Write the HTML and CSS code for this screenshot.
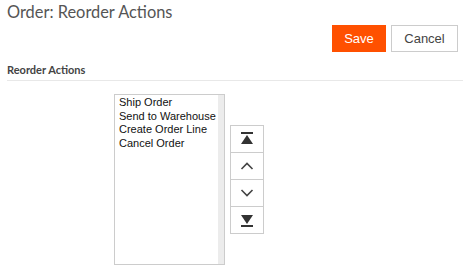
FILE: index.html
```html
<!DOCTYPE html>
<html>
<head>
<meta charset="utf-8">
<link rel="stylesheet" href="styles.css">
</head>
<body>
<div class="page">
  <h1 class="title">Order: Reorder Actions</h1>
  <div class="actions">
    <button class="btn btn-save">Save</button>
    <button class="btn btn-cancel">Cancel</button>
  </div>
  <div class="section-head">Reorder Actions</div>
  <div class="reorder">
    <div class="listbox">
      <ul class="items">
        <li>Ship Order</li>
        <li>Send to Warehouse</li>
        <li>Create Order Line</li>
        <li>Cancel Order</li>
      </ul>
      <div class="scrollbar"></div>
    </div>
    <div class="movers">
      <button class="mover" title="Move to top">
        <svg width="14" height="14" viewBox="0 0 14 14"><rect x="1" y="0" width="12" height="2" fill="#333"/><path d="M7 3 L13 12 L1 12 Z" fill="#333"/></svg>
      </button>
      <button class="mover" title="Move up">
        <svg width="14" height="14" viewBox="0 0 14 14"><path d="M1.5 10 L7 4.5 L12.5 10" fill="none" stroke="#444" stroke-width="1.6"/></svg>
      </button>
      <button class="mover" title="Move down">
        <svg width="14" height="14" viewBox="0 0 14 14"><path d="M1.5 4 L7 9.5 L12.5 4" fill="none" stroke="#444" stroke-width="1.6"/></svg>
      </button>
      <button class="mover" title="Move to bottom">
        <svg width="14" height="14" viewBox="0 0 14 14"><path d="M1 2 L13 2 L7 11 Z" fill="#333"/><rect x="1" y="12" width="12" height="2" fill="#333"/></svg>
      </button>
    </div>
  </div>
</div>
</body>
</html>
```
FILE: styles.css
```css
* { box-sizing: border-box; }
html, body { margin: 0; padding: 0; background: #fff; }
body { font-family: "Liberation Sans", Arial, sans-serif; }
.page { padding: 0 5px 0 7px; }
.title {
  margin: 0;
  padding-top: 2px;
  font-family: Lato, "Liberation Sans", sans-serif;
  font-weight: 400;
  font-size: 16.4px;
  line-height: 20px;
  color: #555;
}
.actions {
  display: flex;
  justify-content: flex-end;
  gap: 5px;
  margin-top: 3px;
}
.btn {
  height: 27px;
  font-family: "Liberation Sans", Arial, sans-serif;
  font-size: 13px;
  padding: 0;
  cursor: pointer;
}
.btn-save {
  width: 54px;
  background: #ff5000;
  border: 1px solid #ff5000;
  color: #fff;
}
.btn-cancel {
  width: 67px;
  background: #fff;
  border: 1px solid #ccc;
  color: #444;
}
.section-head {
  margin-top: 11px;
  margin-right: -5px;
  font-family: Lato, "Liberation Sans", sans-serif;
  font-weight: 700;
  font-size: 11px;
  line-height: 14px;
  color: #444;
  padding-bottom: 3px;
  border-bottom: 1px solid #e8e8e8;
}
.reorder {
  display: flex;
  align-items: center;
  gap: 5px;
  margin-top: 13px;
  padding-left: 107px;
}
.listbox {
  position: relative;
  width: 111px;
  height: 171px;
  border: 1px solid #ccc;
  display: flex;
}
.items {
  list-style: none;
  margin: 0;
  padding: 1px 0 0 4px;
  flex: 1;
  font-size: 11px;
  line-height: 13.7px;
  color: #111;
}
.scrollbar {
  width: 6px;
  background: #ececec;
}
.movers {
  display: flex;
  flex-direction: column;
  width: 34px;
  border: 1px solid #ccc;
  margin-top: -1px;
}
.mover {
  height: 27px;
  width: 100%;
  background: #fff;
  border: 0;
  border-top: 1px solid #ccc;
  padding: 0;
  display: flex;
  align-items: center;
  justify-content: center;
  cursor: pointer;
}
.mover:first-child { border-top: 0; height: 26px; }
```
